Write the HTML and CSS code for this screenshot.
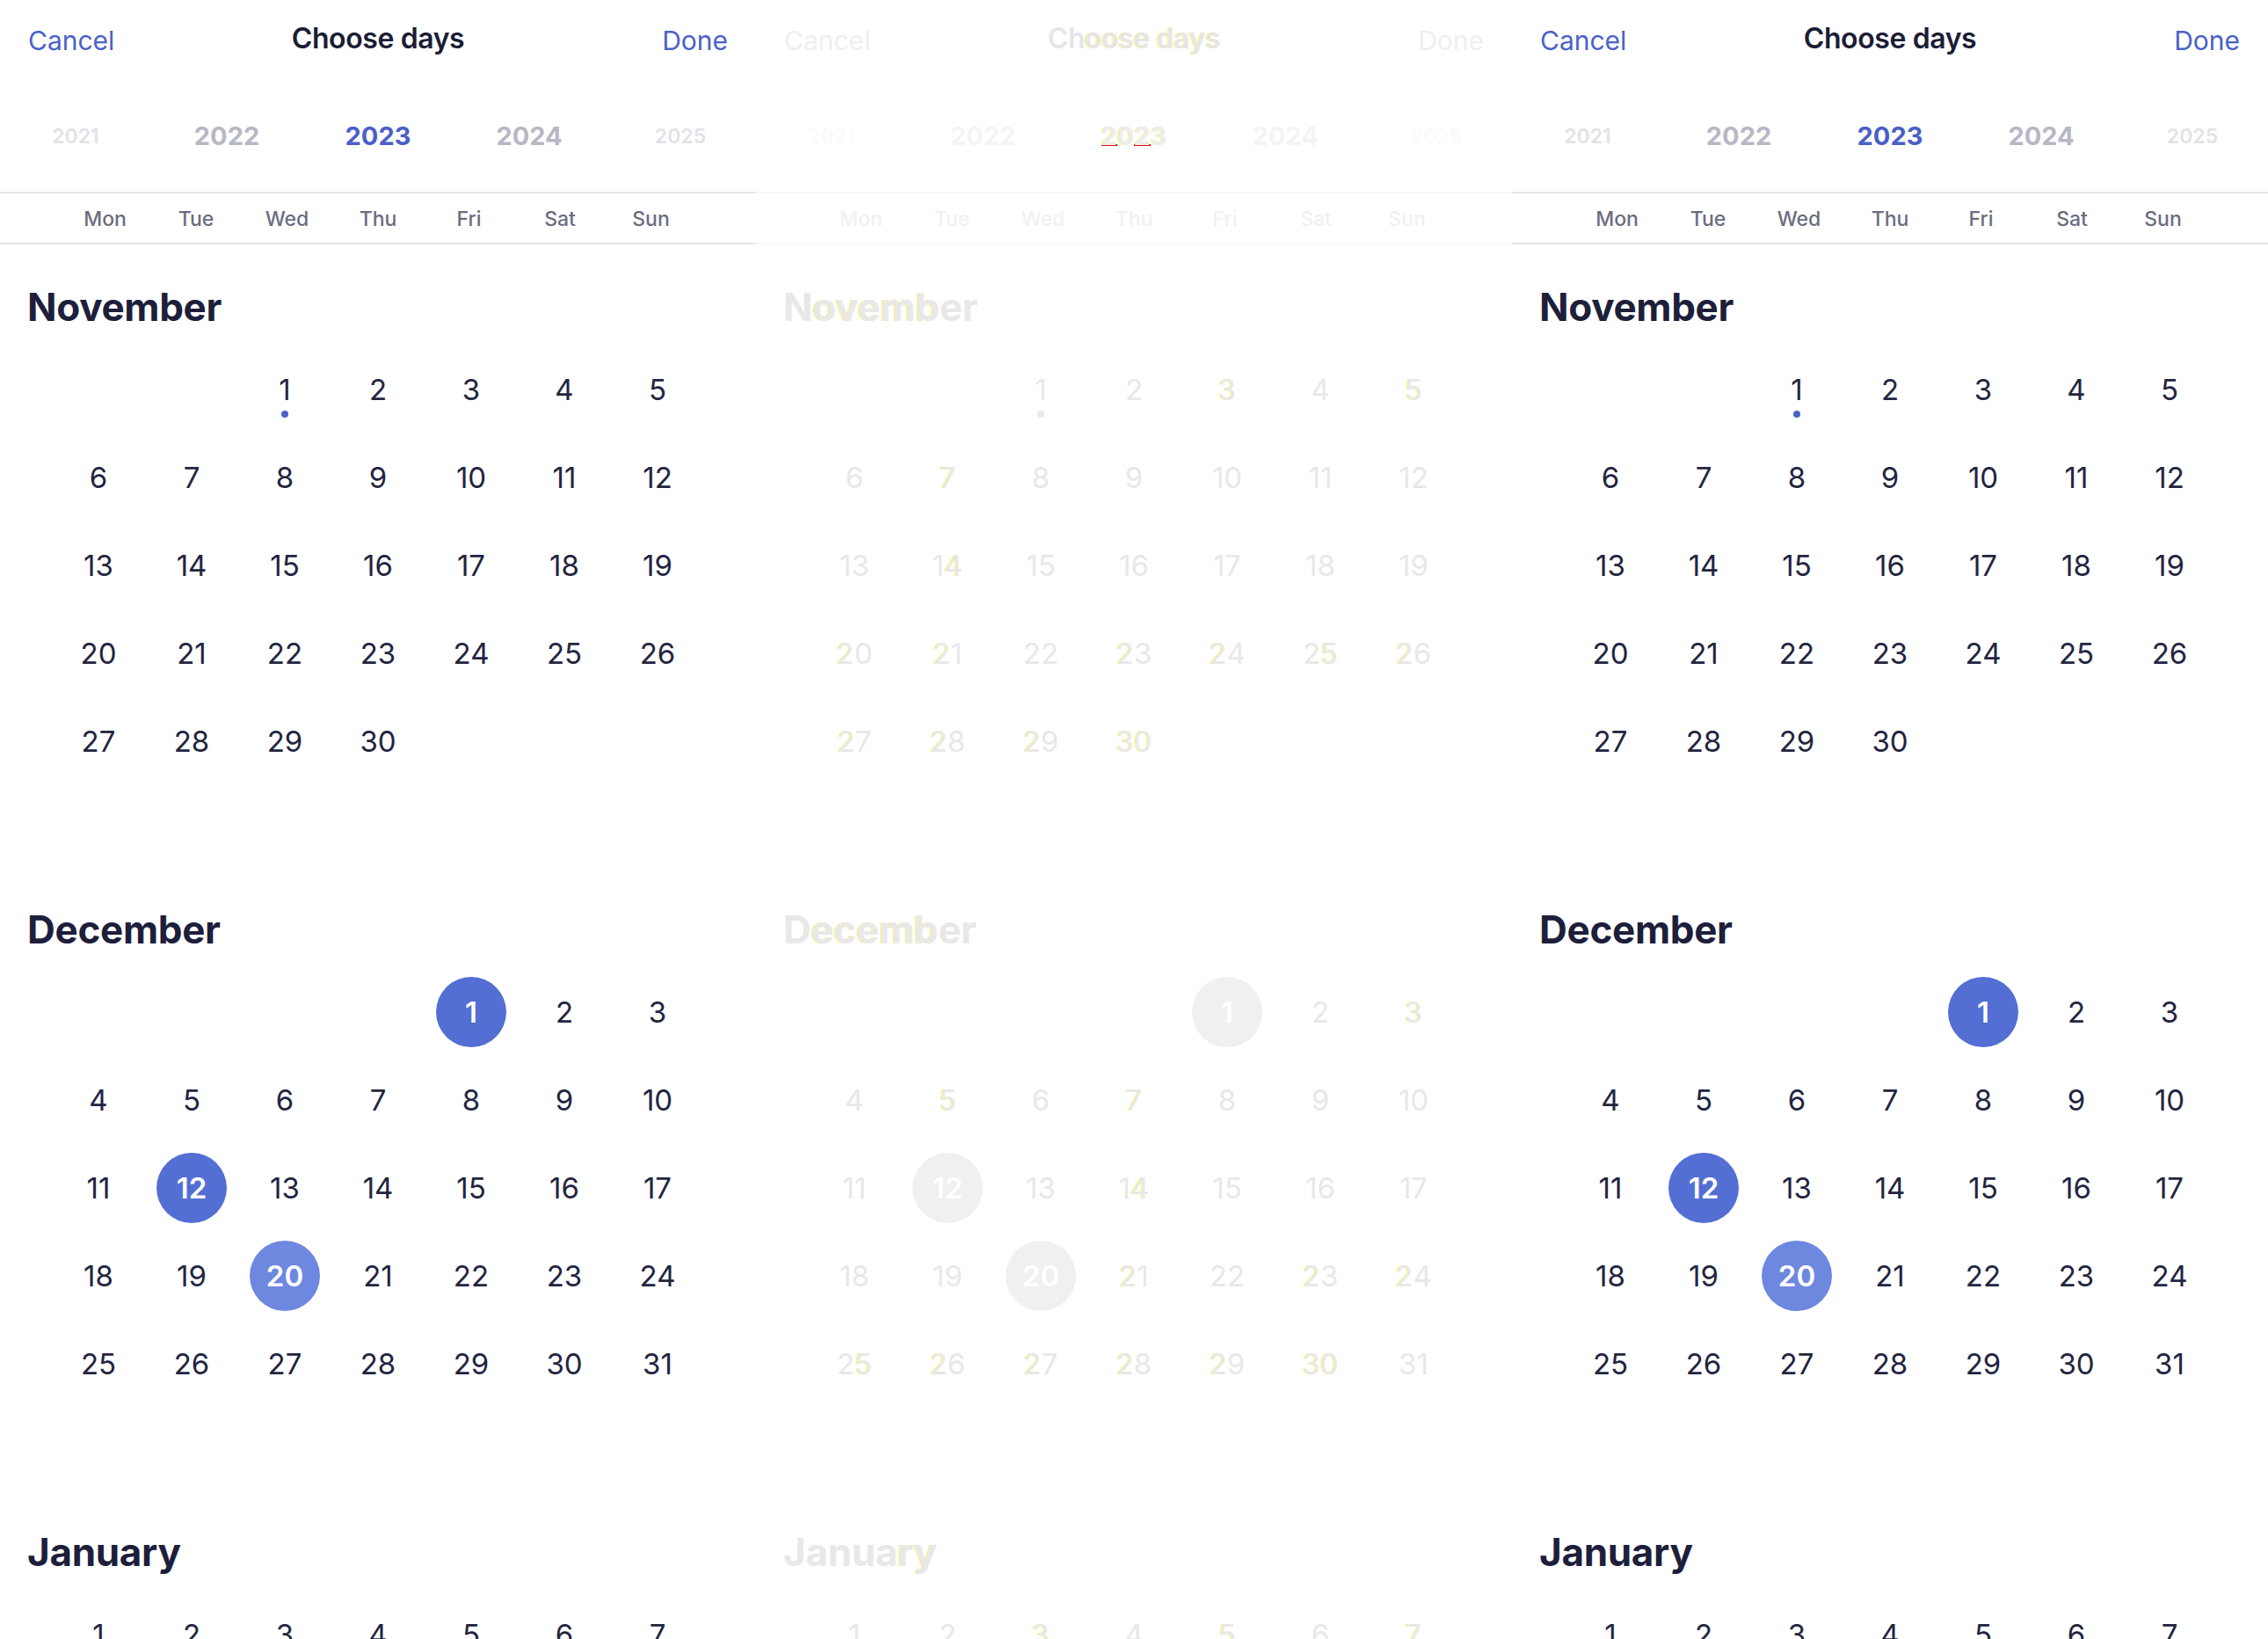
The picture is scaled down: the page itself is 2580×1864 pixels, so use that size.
FILE: index.html
```html
<!DOCTYPE html>
<html lang="en">
<head>
<meta charset="utf-8">
<title>Choose days</title>
<link rel="stylesheet" href="styles.css">
</head>
<body>
<main class="screens">

<section class="panel">
  <header class="top">
    <div class="nav"><span class="link">Cancel</span><h1 class="title">Choose days</h1><span class="link end">Done</span></div>
    <div class="years"><span class="y far">2021</span><span class="y near">2022</span><span class="y cur">2023</span><span class="y near">2024</span><span class="y far">2025</span></div>
  </header>
  <div class="weekdays"><span>Mon</span><span>Tue</span><span>Wed</span><span>Thu</span><span>Fri</span><span>Sat</span><span>Sun</span></div>
  <div class="months">
    <div class="month">
      <h2 class="mname">November</h2>
      <div class="grid">
        <span></span><span></span><span class="today">1</span><span>2</span><span>3</span><span>4</span><span>5</span>
        <span>6</span><span>7</span><span>8</span><span>9</span><span>10</span><span>11</span><span>12</span>
        <span>13</span><span>14</span><span>15</span><span>16</span><span>17</span><span>18</span><span>19</span>
        <span>20</span><span>21</span><span>22</span><span>23</span><span>24</span><span>25</span><span>26</span>
        <span>27</span><span>28</span><span>29</span><span>30</span>
      </div>
    </div>
    <div class="month">
      <h2 class="mname">December</h2>
      <div class="grid">
        <span></span><span></span><span></span><span></span><span><b class="sel">1</b></span><span>2</span><span>3</span>
        <span>4</span><span>5</span><span>6</span><span>7</span><span>8</span><span>9</span><span>10</span>
        <span>11</span><span><b class="sel">12</b></span><span>13</span><span>14</span><span>15</span><span>16</span><span>17</span>
        <span>18</span><span>19</span><span><b class="sel soft">20</b></span><span>21</span><span>22</span><span>23</span><span>24</span>
        <span>25</span><span>26</span><span>27</span><span>28</span><span>29</span><span>30</span><span>31</span>
      </div>
    </div>
    <div class="month">
      <h2 class="mname">January</h2>
      <div class="grid">
        <span>1</span><span>2</span><span>3</span><span>4</span><span>5</span><span>6</span><span>7</span>
      </div>
    </div>
  </div>
</section>

<section class="panel ghost">
  <header class="top">
    <div class="nav"><span class="link">Cancel</span><h1 class="title">Ch<em class="hl">oose days</em></h1><span class="link end">Done</span></div>
    <div class="years"><span class="y far">2021</span><span class="y near">2022</span><span class="y cur"><em class="hl ul">2</em><em class="hl">0</em><em class="hl ul">2</em><em class="hl">3</em></span><span class="y near">2024</span><span class="y far">2025</span></div>
  </header>
  <div class="weekdays"><span>Mon</span><span>Tue</span><span>Wed</span><span>Thu</span><span>Fri</span><span>Sat</span><span>Sun</span></div>
  <div class="months">
    <div class="month">
      <h2 class="mname">N<em class="hl">ovemb</em>er</h2>
      <div class="grid">
        <span></span><span></span><span class="today">1</span><span>2</span><span><em class="hl">3</em></span><span>4</span><span><em class="hl">5</em></span>
        <span>6</span><span><em class="hl">7</em></span><span>8</span><span>9</span><span>10</span><span>11</span><span>12</span>
        <span>13</span><span>1<em class="hl">4</em></span><span>15</span><span>16</span><span>17</span><span>18</span><span>19</span>
        <span><em class="hl">2</em>0</span><span><em class="hl">2</em>1</span><span>22</span><span><em class="hl">2</em>3</span><span><em class="hl">2</em>4</span><span>2<em class="hl">5</em></span><span><em class="hl">2</em>6</span>
        <span><em class="hl">2</em>7</span><span><em class="hl">2</em>8</span><span><em class="hl">2</em>9</span><span><em class="hl">30</em></span>
      </div>
    </div>
    <div class="month">
      <h2 class="mname">D<em class="hl">ecemb</em>er</h2>
      <div class="grid">
        <span></span><span></span><span></span><span></span><span><b class="sel">1</b></span><span>2</span><span><em class="hl">3</em></span>
        <span>4</span><span><em class="hl">5</em></span><span>6</span><span><em class="hl">7</em></span><span>8</span><span>9</span><span>10</span>
        <span>11</span><span><b class="sel">12</b></span><span>13</span><span>1<em class="hl">4</em></span><span>15</span><span>16</span><span>17</span>
        <span>18</span><span>19</span><span><b class="sel soft">20</b></span><span><em class="hl">2</em>1</span><span>22</span><span><em class="hl">2</em>3</span><span><em class="hl">2</em>4</span>
        <span>2<em class="hl">5</em></span><span><em class="hl">2</em>6</span><span><em class="hl">2</em>7</span><span><em class="hl">2</em>8</span><span><em class="hl">2</em>9</span><span><em class="hl">30</em></span><span>31</span>
      </div>
    </div>
    <div class="month">
      <h2 class="mname">Janua<em class="hl">ry</em></h2>
      <div class="grid">
        <span>1</span><span>2</span><span><em class="hl">3</em></span><span>4</span><span><em class="hl">5</em></span><span>6</span><span><em class="hl">7</em></span>
      </div>
    </div>
  </div>
</section>

<section class="panel">
  <header class="top">
    <div class="nav"><span class="link">Cancel</span><h1 class="title">Choose days</h1><span class="link end">Done</span></div>
    <div class="years"><span class="y far">2021</span><span class="y near">2022</span><span class="y cur">2023</span><span class="y near">2024</span><span class="y far">2025</span></div>
  </header>
  <div class="weekdays"><span>Mon</span><span>Tue</span><span>Wed</span><span>Thu</span><span>Fri</span><span>Sat</span><span>Sun</span></div>
  <div class="months">
    <div class="month">
      <h2 class="mname">November</h2>
      <div class="grid">
        <span></span><span></span><span class="today">1</span><span>2</span><span>3</span><span>4</span><span>5</span>
        <span>6</span><span>7</span><span>8</span><span>9</span><span>10</span><span>11</span><span>12</span>
        <span>13</span><span>14</span><span>15</span><span>16</span><span>17</span><span>18</span><span>19</span>
        <span>20</span><span>21</span><span>22</span><span>23</span><span>24</span><span>25</span><span>26</span>
        <span>27</span><span>28</span><span>29</span><span>30</span>
      </div>
    </div>
    <div class="month">
      <h2 class="mname">December</h2>
      <div class="grid">
        <span></span><span></span><span></span><span></span><span><b class="sel">1</b></span><span>2</span><span>3</span>
        <span>4</span><span>5</span><span>6</span><span>7</span><span>8</span><span>9</span><span>10</span>
        <span>11</span><span><b class="sel">12</b></span><span>13</span><span>14</span><span>15</span><span>16</span><span>17</span>
        <span>18</span><span>19</span><span><b class="sel soft">20</b></span><span>21</span><span>22</span><span>23</span><span>24</span>
        <span>25</span><span>26</span><span>27</span><span>28</span><span>29</span><span>30</span><span>31</span>
      </div>
    </div>
    <div class="month">
      <h2 class="mname">January</h2>
      <div class="grid">
        <span>1</span><span>2</span><span>3</span><span>4</span><span>5</span><span>6</span><span>7</span>
      </div>
    </div>
  </div>
</section>

</main>
</body>
</html>
```

FILE: styles.css
```css
* { box-sizing: border-box; margin: 0; padding: 0; }

html, body { background: #ffffff; }

body {
  margin: 0;
  overflow: hidden;
  font-family: Inter, "Noto Sans", "Liberation Sans", sans-serif;
  color: #1f2140;
}

.screens {
  display: flex;
  width: 2580px;
  height: 1864px;
  overflow: hidden;
}

.panel {
  flex: none;
  width: 860px;
  height: 1864px;
  overflow: hidden;
  background: #ffffff;
}

/* ---------- header ---------- */
.nav {
  display: grid;
  grid-template-columns: 1fr auto 1fr;
  align-items: center;
  height: 92px;
  padding: 0 32px;
}

.link {
  font-size: 30px;
  line-height: 36px;
  color: #4a62c8;
  justify-self: start;
}

.link.end { justify-self: end; }

.title {
  font-size: 32px;
  line-height: 38px;
  font-weight: 600;
  color: #1b1d36;
  letter-spacing: -0.4px;
  margin-top: -4px;
}

.years {
  display: grid;
  grid-template-columns: repeat(5, 1fr);
  align-items: center;
  height: 128px;
  border-bottom: 2px solid #e6e6ea;
}

.y {
  text-align: center;
  font-weight: 700;
  font-size: 29px;
  line-height: 36px;
}

.y.cur { color: #4a5fc8; }
.y.near { color: #b7b8c5; }
.y.far { color: #e2e2e8; font-size: 23px; font-weight: 600; }

.weekdays {
  display: grid;
  grid-template-columns: repeat(7, 103.5px);
  justify-content: center;
  align-items: center;
  height: 58px;
  padding-top: 2px;
  border-bottom: 2px solid #e6e6ea;
}

.weekdays span {
  text-align: center;
  font-size: 23px;
  font-weight: 500;
  color: #6b6d80;
}

/* ---------- months ---------- */
.months { padding-top: 45px; }

.month { margin-bottom: 138px; }

.mname {
  font-size: 44px;
  line-height: 52px;
  font-weight: 700;
  color: #1d1f3b;
  padding-left: 31px;
  letter-spacing: -0.3px;
}

.grid {
  display: grid;
  grid-template-columns: repeat(7, 106px);
  grid-auto-rows: 100px;
  justify-content: center;
  margin-top: 18px;
}

.grid span {
  position: relative;
  display: flex;
  align-items: center;
  justify-content: center;
  font-size: 33px;
  font-weight: 400;
  color: #23253f;
}

.today::after {
  content: "";
  position: absolute;
  left: 50%;
  top: calc(50% + 24px);
  width: 8px;
  height: 8px;
  margin-left: -4px;
  border-radius: 50%;
  background: #4a63c9;
}

.sel {
  display: flex;
  align-items: center;
  justify-content: center;
  width: 80px;
  height: 80px;
  border-radius: 50%;
  background: #546fd3;
  color: #ffffff;
  font-weight: 600;
}

.sel.soft { background: #6e88e0; }

em { font-style: normal; }

/* ---------- faded middle screen ---------- */
.ghost .link { color: #efeff0; }
.ghost .title { color: #e6e6e6; }
.ghost .y.cur { color: #ececec; }
.ghost .y.near { color: #f4f4f4; }
.ghost .y.far { color: #fafafa; }
.ghost .years,
.ghost .weekdays { border-bottom-color: #f8f8f8; }
.ghost .weekdays span { color: #f1f1f1; }
.ghost .mname { color: #e8e8e8; }
.ghost .grid span { color: #e8e8e8; }
.ghost .today::after { background: #e8e8e8; }
.ghost .sel { background: #f0f0f0; color: #ffffff; }
.ghost .sel.soft { background: #f0f0f0; }

.ghost .hl { text-shadow: -1px 0 0 #f6ee5a; }

.ghost .ul {
  background: linear-gradient(#e01010, #e01010) no-repeat left calc(100% - 6px) / 100% 2px;
}
```
